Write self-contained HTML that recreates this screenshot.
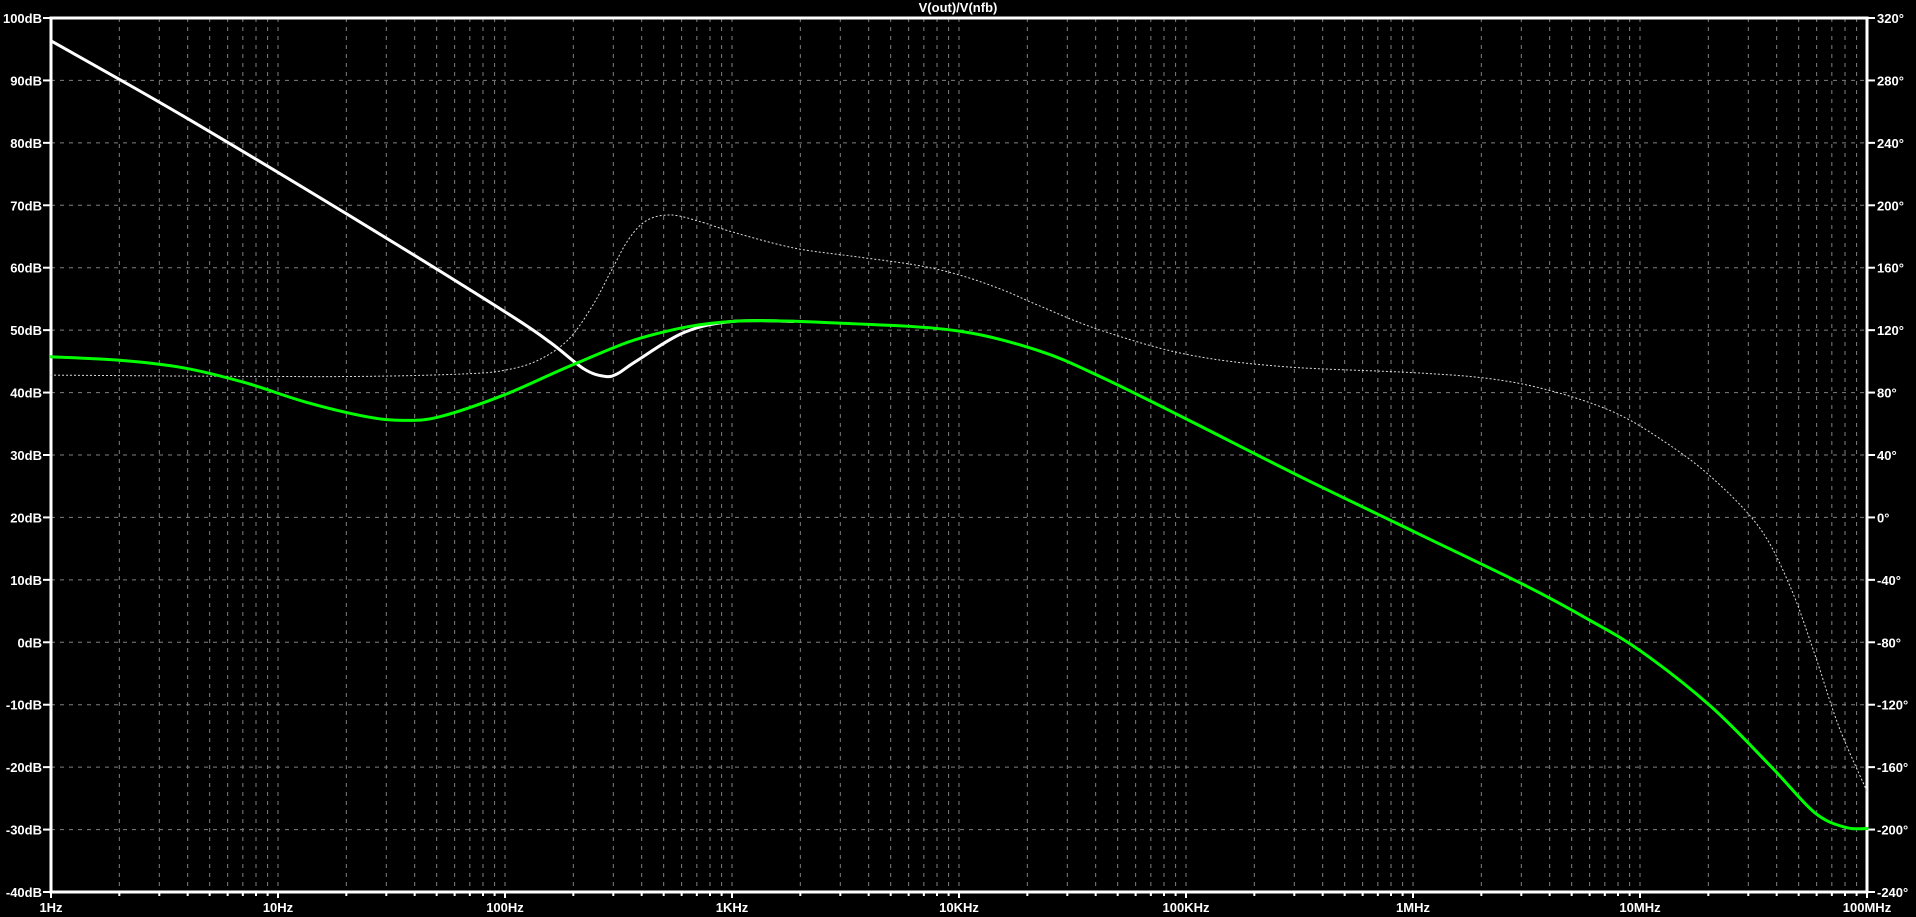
<!DOCTYPE html>
<html><head><meta charset="utf-8"><style>
html,body{margin:0;padding:0;background:#000;width:1916px;height:917px;overflow:hidden}
svg{display:block}
text{font-family:"Liberation Sans",sans-serif;font-weight:bold;font-size:13px;fill:#fff}
</style></head><body>
<svg id="s" width="1916" height="917" viewBox="0 0 1916 917"></svg>
<script>
const s=document.getElementById('s');
const L=51,R=1867,T=18,B=892,D=(R-L)/8,H=(B-T)/14;
let o='';
for(let k=0;k<8;k++)for(let m=1;m<=10;m++){
  const x=L+D*(k+Math.log10(m));
  if(x<=L+1||x>=R-1)continue;
  o+=`<line x1="${x}" y1="${T}" x2="${x}" y2="${B}" stroke="#808080" stroke-width="1" stroke-dasharray="4,5"/>`;
}
for(let k=0;k<8;k++)for(let m=1;m<=10;m++){
  const x=L+D*(k+Math.log10(m));
  o+=`<line x1="${x}" y1="${B}" x2="${x}" y2="${B+(m==1||m==10?6:4)}" stroke="#fff" stroke-width="2"/>`;
}
for(let i=1;i<14;i++){const y=T+H*i;
  o+=`<line x1="${L}" y1="${y}" x2="${R}" y2="${y}" stroke="#808080" stroke-width="1" stroke-dasharray="4,5"/>`;}
o+=`<rect x="${L}" y="${T}" width="${R-L}" height="${B-T}" fill="none" stroke="#fff" stroke-width="3"/>`;
for(let i=0;i<=14;i++){const y=T+H*i;
  o+=`<line x1="${L-8}" y1="${y}" x2="${L}" y2="${y}" stroke="#fff" stroke-width="2"/>`;
  o+=`<line x1="${R}" y1="${y}" x2="${R+8}" y2="${y}" stroke="#fff" stroke-width="2"/>`;
  o+=`<text x="${L-9}" y="${y+5}" text-anchor="end">${100-10*i}dB</text>`;
  o+=`<text x="${R+10}" y="${y+5}">${320-40*i}°</text>`;}
const fl=['1Hz','10Hz','100Hz','1KHz','10KHz','100KHz','1MHz','10MHz','100MHz'];
fl.forEach((t,i)=>{o+=`<text x="${L+D*i}" y="${B+20}" text-anchor="middle">${t}</text>`;});
o+=`<text x="958" y="12" text-anchor="middle" font-size="12">V(out)/V(nfb)</text>`;
const sc=1916/1568;
function path(pts){
  const p=pts.map(a=>[a[0]*sc,a[1]*sc]);
  let d=`M${p[0][0]},${p[0][1]}`;
  for(let i=0;i<p.length-1;i++){
    const p0=p[Math.max(0,i-1)],p1=p[i],p2=p[i+1],p3=p[Math.min(p.length-1,i+2)];
    const c1=[p1[0]+(p2[0]-p0[0])/6,p1[1]+(p2[1]-p0[1])/6];
    const c2=[p2[0]-(p3[0]-p1[0])/6,p2[1]-(p3[1]-p1[1])/6];
    d+=`C${c1[0]},${c1[1]} ${c2[0]},${c2[1]} ${p2[0]},${p2[1]}`;
  }
  return d;
}
const ph=[[41,307],[200,308],[300,308],[380,306],[413,303],[440,295],[465,278],[485,250],[500,222],[515,195],[530,180],[550,176],[575,182],[600,190],[650,203],[700,210],[750,217],[785,225],[820,237],[850,250],[900,270],[971,290],[1050,300],[1157,305],[1220,310],[1270,320],[1320,337],[1360,360],[1400,390],[1440,432],[1465,480],[1485,535],[1505,595],[1529,650]];
o+=`<path d="${path(ph)}" fill="none" stroke="#ddd" stroke-width="1" stroke-dasharray="2,2"/>`;
const wm=[[41,33],[150,95],[300,185],[413,255],[450,280],[478,302],[495,308],[505,306],[520,296],[560,272],[600,263],[650,263]];
o+=`<path d="${path(wm)}" fill="none" stroke="#fff" stroke-width="3"/>`;
const gr=[[41,292],[100,295],[150,301],[200,313],[250,329],[300,341],[330,344],[360,341],[413,323],[470,298],[530,275],[600,263],[700,265],[785,271],[850,287],[900,308],[971,343],[1064,390],[1157,435],[1250,480],[1300,507],[1343,533],[1400,578],[1450,628],[1485,665],[1510,677],[1529,678]];
o+=`<path d="${path(gr)}" fill="none" stroke="#00ff00" stroke-width="3"/>`;
s.innerHTML=o;
</script>
</body></html>
